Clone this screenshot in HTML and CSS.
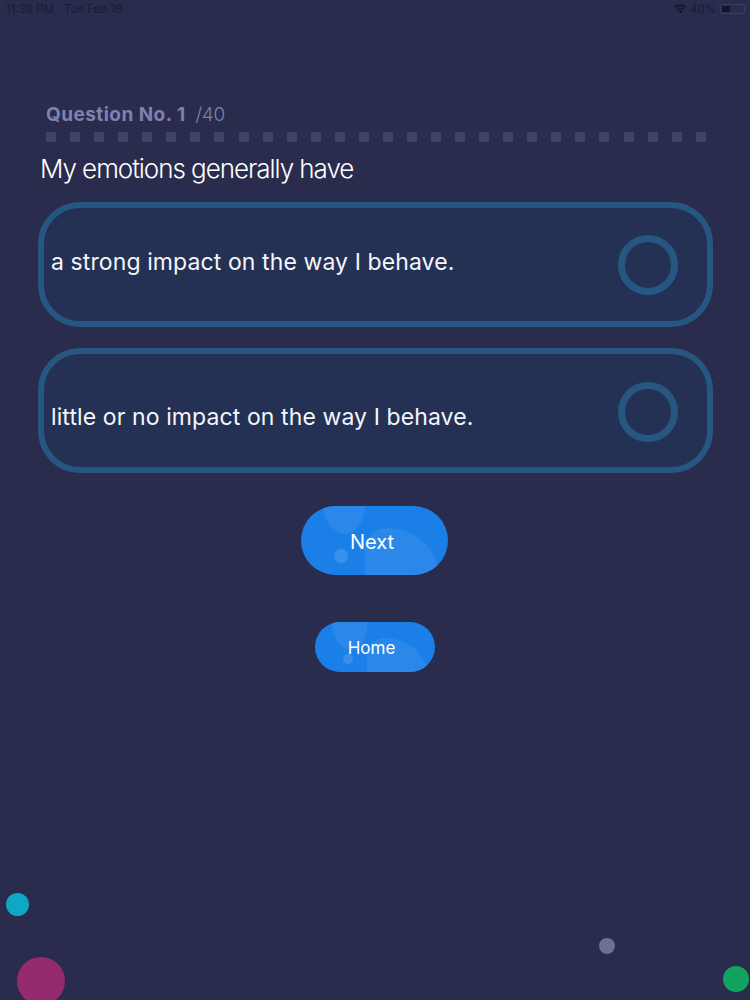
FILE: index.html
```html
<!DOCTYPE html>
<html lang="en">
<head>
<meta charset="utf-8">
<title>Question</title>
<link rel="stylesheet" href="styles.css">
</head>
<body>
<div class="page">
  <header class="status">
    <div class="status-left"><span>11:39 PM</span><span>Tue Feb 18</span></div>
    <div class="status-right">
      <svg class="wifi" viewBox="0 0 16 12" aria-hidden="true"><path d="M8 11.5 5.6 8.7a3.6 3.6 0 0 1 4.8 0zM4.4 7.4 3 5.8a7.4 7.4 0 0 1 10 0l-1.4 1.6a5.4 5.4 0 0 0-7.2 0zM1.9 4.6.5 3a11.2 11.2 0 0 1 15 0l-1.4 1.6a9.2 9.2 0 0 0-12.2 0z"/></svg>
      <span>40%</span>
      <span class="battery"><span class="battery-fill"></span></span>
    </div>
  </header>

  <main class="quiz">
    <div class="question-no"><strong>Question No. 1</strong><span>/40</span></div>
    <div class="dots">
      <i></i><i></i><i></i><i></i><i></i><i></i><i></i>
      <i></i><i></i><i></i><i></i><i></i><i></i><i></i>
      <i></i><i></i><i></i><i></i><i></i><i></i><i></i>
      <i></i><i></i><i></i><i></i><i></i><i></i><i></i>
    </div>
    <h1 class="prompt">My emotions generally have</h1>

    <div class="options">
      <div class="option">
        <span class="option-text">a strong impact on the way I behave.</span>
        <span class="radio"></span>
      </div>
      <div class="option option-second">
        <span class="option-text">little or no impact on the way I behave.</span>
        <span class="radio"></span>
      </div>
    </div>

    <div class="actions">
      <button class="btn btn-next" type="button">
        <span class="blob blob-a"></span><span class="blob blob-b"></span><span class="blob blob-c"></span>
        <span class="btn-label">Next</span>
      </button>
      <button class="btn btn-home" type="button">
        <span class="blob blob-a"></span><span class="blob blob-b"></span><span class="blob blob-c"></span>
        <span class="btn-label">Home</span>
      </button>
    </div>
  </main>

  <span class="ball ball-teal"></span>
  <span class="ball ball-pink"></span>
  <span class="ball ball-grey"></span>
  <span class="ball ball-green"></span>
</div>
</body>
</html>
```

FILE: styles.css
```css
* { box-sizing: border-box; }

html, body {
  margin: 0;
  height: 100%;
  background: #292c4d;
}

.page {
  position: relative;
  width: 750px;
  height: 1000px;
  overflow: hidden;
  background: #292c4d;
  font-family: Inter, "Liberation Sans", sans-serif;
  color: #fff;
}

.status {
  display: flex;
  justify-content: space-between;
  align-items: center;
  height: 18px;
  padding: 0 5px 0 6px;
  font-size: 11.5px;
  color: #1a1b39;
}

.status-left { display: flex; gap: 10px; }

.status-right {
  display: flex;
  align-items: center;
  gap: 3px;
}

.wifi { width: 13px; height: 10px; fill: #14152f; }

.battery {
  display: block;
  width: 25px;
  height: 10px;
  margin-left: 1px;
  padding: 1px;
  border: 1px solid #3d3f5e;
  border-radius: 3px;
}

.battery-fill {
  display: block;
  width: 8px;
  height: 100%;
  background: #14152f;
}

.quiz {
  padding: 86px 38px 0;
}

.question-no {
  display: flex;
  align-items: baseline;
  gap: 10px;
  padding-left: 8px;
  height: 22px;
  line-height: 22px;
  font-size: 19px;
  color: #7e82ad;
}

.question-no strong { font-weight: 700; letter-spacing: 0.45px; }
.question-no span { font-weight: 300; letter-spacing: -0.3px; }

.dots {
  display: flex;
  gap: 14.07px;
  margin: 6px 0 0 8px;
}

.dots i {
  display: block;
  width: 10px;
  height: 10px;
  background: #3f4267;
}

.prompt {
  margin: 9px 0 0 2px;
  height: 36px;
  line-height: 36px;
  font-size: 26px;
  font-weight: 300;
  letter-spacing: -1.05px;
  color: #fff;
}

.options {
  display: flex;
  flex-direction: column;
  gap: 21px;
  margin-top: 15px;
}

.option {
  display: flex;
  align-items: center;
  justify-content: space-between;
  width: 675px;
  height: 125px;
  padding: 0 29px 0 7px;
  border: 6px solid #255780;
  border-radius: 42px;
  background: #243155;
}

.option-text {
  font-size: 23px;
  font-weight: 400;
  letter-spacing: 0.1px;
  color: #f4f6fb;
  position: relative;
  top: -3px;
}

.option-second .option-text { top: 6px; }

.radio {
  display: block;
  width: 60px;
  height: 60px;
  border: 7px solid #255780;
  border-radius: 50%;
}

.option-second .radio { position: relative; top: 1px; }

.actions {
  display: flex;
  flex-direction: column;
  align-items: center;
  margin-top: 33px;
  padding-right: 2px;
}

.btn {
  position: relative;
  display: block;
  overflow: hidden;
  border: 0;
  border-radius: 999px;
  background: #1a80e8;
  color: #fff;
  font-family: inherit;
}

.btn-next { width: 147px; height: 69px; padding: 2px 4px 0 0; font-size: 20px; }
.btn-home { width: 120px; height: 50px; margin: 47px 0 0 2px; padding: 2px 7px 0 0; font-size: 17px; }

.btn-label { position: relative; }

.blob {
  position: absolute;
  background: #2b88ea;
  border-radius: 50%;
}

.btn-next .blob-a { left: 21px; top: -36px; width: 43px; height: 64px; border-radius: 0 0 50% 60%; }
.btn-next .blob-b { left: 64px; top: 22px; width: 74px; height: 70px; border-radius: 30% 70% 0 0; }
.btn-next .blob-c { left: 33px; top: 43px; width: 14px; height: 14px; background: #3a8fec; }

.btn-home .blob-a { left: 17px; top: -24px; width: 35px; height: 52px; border-radius: 0 0 50% 60%; }
.btn-home .blob-b { left: 52px; top: 16px; width: 62px; height: 60px; border-radius: 30% 70% 0 0; }
.btn-home .blob-c { left: 28px; top: 32px; width: 10px; height: 10px; background: #3a8fec; }

.ball { position: absolute; display: block; border-radius: 50%; }
.ball-teal { left: 6px; top: 893px; width: 23px; height: 23px; background: #10a7c4; }
.ball-pink { left: 17px; top: 957px; width: 48px; height: 48px; background: #952a6e; }
.ball-grey { left: 599px; top: 938px; width: 16px; height: 16px; background: #6d7197; }
.ball-green { left: 723px; top: 966px; width: 26px; height: 26px; background: #12a45f; }
```
